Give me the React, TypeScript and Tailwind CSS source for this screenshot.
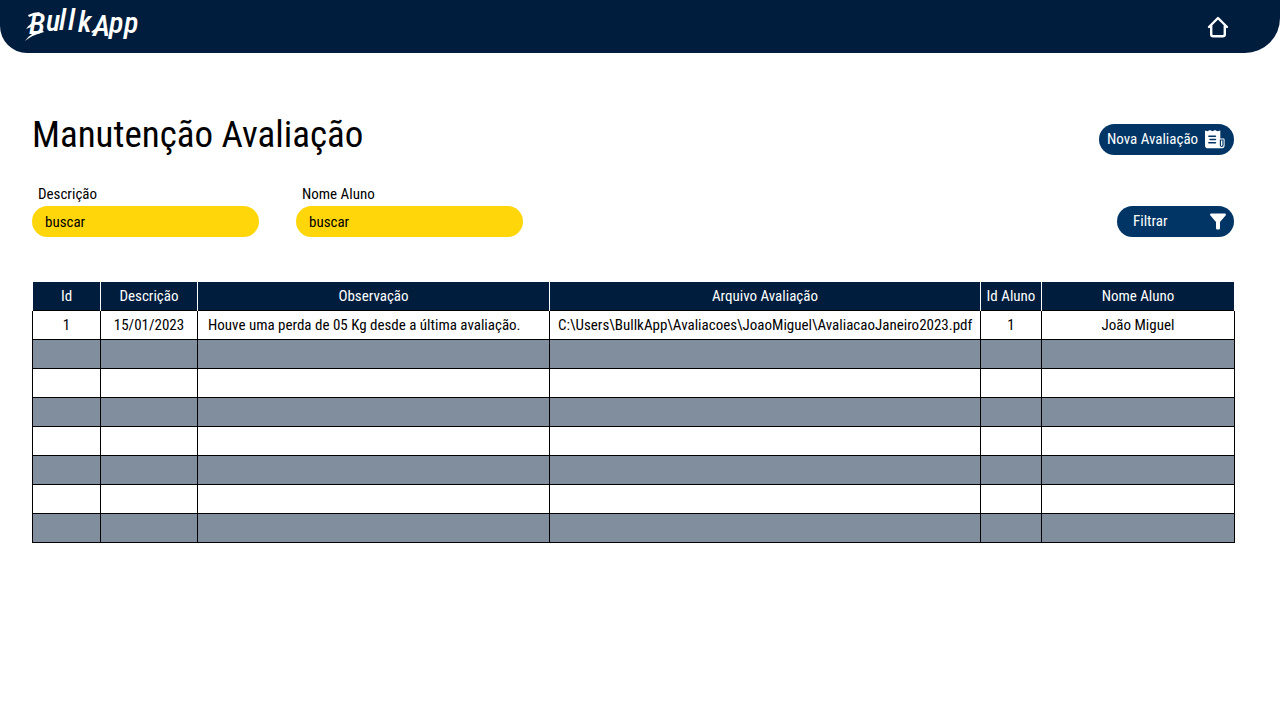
import React from "react";

type Evaluation = {
  id: string;
  date: string;
  note: string;
  file: string;
  studentId: string;
  student: string;
};

const evaluations: Evaluation[] = [
  {
    id: "1",
    date: "15/01/2023",
    note: "Houve uma perda de 05 Kg desde a última avaliação.",
    file: "C:\\Users\\BullkApp\\Avaliacoes\\JoaoMiguel\\AvaliacaoJaneiro2023.pdf",
    studentId: "1",
    student: "João Miguel",
  },
];

const emptyRow: Evaluation = { id: "", date: "", note: "", file: "", studentId: "", student: "" };
const rows: Evaluation[] = [...evaluations, ...Array.from({ length: 7 }, () => emptyRow)];

function Logo() {
  return (
    <svg viewBox="0 0 120 53" className="h-[53px] w-[120px] overflow-visible" fill="#fff" role="img" aria-label="BullkApp">
      <text
        x="5 22 35 44 54 69 85 100"
        y="34 31 30 30 32 36 33 33"
        fontFamily="'Roboto Condensed', 'Liberation Sans', sans-serif"
        fontStyle="italic"
        fontWeight="500"
        fontSize="30"
      >
        BullkApp
      </text>
      <path d="M4 15Q10 12 16 12L14 14.5Q10 14.5 5 17Z" />
      <path d="M1 41Q6 33 18 30L20 32Q8 35 1 41Z" />
      <path d="M2 29Q5 25 8 23L7 27Z" />
      <path d="M67 32Q70 29 75 27L74 29.5Q71 30.5 69 33Z" />
    </svg>
  );
}

function HomeIcon() {
  return (
    <svg viewBox="0 0 22 22" className="size-[22px]" fill="none" stroke="#fff" strokeWidth="2.4" strokeLinecap="round" strokeLinejoin="round" aria-hidden="true">
      <path d="M2 11L11 2L20 11M4.2 9.5V18.2Q4.2 20.2 6.2 20.2H15.8Q17.8 20.2 17.8 18.2V9.5" />
    </svg>
  );
}

function ReceiptIcon() {
  return (
    <svg viewBox="0 0 20 20" className="size-5 shrink-0" aria-hidden="true">
      <path fill="#fff" d="M0 1.5L2.5 2.3L5 1L7.5 2.3L10 1L12.5 2.3L15.3 1.5V9.6H18.5Q19.6 9.6 19.6 10.6V16.4Q19.6 19.2 16.5 19.2H3Q0 19.2 0 16.4Z" />
      <path stroke="#003566" strokeWidth="1.4" strokeLinecap="round" fill="none" d="M3.8 7.3H10.5M5 10.5H10.5M3.8 13.7H10.5" />
      <path fill="none" stroke="#003566" strokeWidth="1.2" d="M15.4 11H18V16Q18 17.5 16.7 17.5Q15.4 17.5 15.4 16Z" />
    </svg>
  );
}

function FilterIcon() {
  return (
    <svg viewBox="0 0 16 17" className="h-[17px] w-4" fill="#fff" aria-hidden="true">
      <path d="M.8.6H15.2Q16.4 1.2 15.6 2.4L10 8.9V15Q10 16.6 8.8 16.6H7.2Q6 16.6 6 15V8.9L.4 2.4Q-.4 1.2.8.6Z" />
    </svg>
  );
}

function SearchField({ id, label }: { id: string; label: string }) {
  return (
    <div className="flex w-[227px] flex-col">
      <label htmlFor={id} className="pl-1.5 leading-6">
        {label}
      </label>
      <input
        id={id}
        type="text"
        placeholder="buscar"
        className="h-[31px] w-full rounded-full bg-[#ffd60a] px-[13px] outline-none placeholder:text-black placeholder:opacity-100"
      />
    </div>
  );
}

export default function App() {
  return (
    <div className="min-h-screen bg-white font-['Roboto_Condensed','Liberation_Sans',sans-serif] text-[15px] text-black">
      <header className="flex h-[53px] items-center justify-between rounded-bl-[27px] rounded-br-[35px] bg-[#001d3d] pr-[51px] pl-6">
        <Logo />
        <a href="#" aria-label="Início">
          <HomeIcon />
        </a>
      </header>

      <main className="pt-[57px] pr-[45px] pl-8">
        <div className="flex items-center justify-between">
          <h1 className="text-[37px] leading-[50px]">Manutenção Avaliação</h1>
          <button type="button" className="mt-2 mr-px flex h-[31px] w-[135px] items-center justify-between rounded-full bg-[#003566] pr-[9px] pl-2 whitespace-nowrap text-white">
            Nova Avaliação
            <ReceiptIcon />
          </button>
        </div>

        <div className="mt-[22px] flex items-end justify-between">
          <div className="flex gap-[37px]">
            <SearchField id="descricao" label="Descrição" />
            <SearchField id="nome-aluno" label="Nome Aluno" />
          </div>
          <button type="button" className="mr-px flex h-[31px] w-[117px] items-center justify-between rounded-full bg-[#003566] pr-2 pl-4 text-white">
            Filtrar
            <FilterIcon />
          </button>
        </div>

        <table className="mt-[45px] w-full table-fixed border-collapse text-center leading-7 whitespace-nowrap">
          <colgroup>
            <col className="w-[68px]" />
            <col className="w-[97px]" />
            <col className="w-[352px]" />
            <col className="w-[431px]" />
            <col className="w-[61px]" />
            <col />
          </colgroup>
          <thead>
            <tr className="h-7 bg-[#001d3d] text-white *:border-x *:border-white *:p-0 *:font-normal">
              <th scope="col">Id</th>
              <th scope="col">Descrição</th>
              <th scope="col">Observação</th>
              <th scope="col">Arquivo Avaliação</th>
              <th scope="col">Id Aluno</th>
              <th scope="col">Nome Aluno</th>
            </tr>
          </thead>
          <tbody>
            {rows.map((row, i) => (
              <tr key={i} className="h-[29px] *:border *:border-black even:bg-[#808e9e]">
                <td>{row.id}</td>
                <td>{row.date}</td>
                <td className="pl-2.5 text-left">{row.note}</td>
                <td className="pl-2 text-left">{row.file}</td>
                <td>{row.studentId}</td>
                <td>{row.student}</td>
              </tr>
            ))}
          </tbody>
        </table>
      </main>
    </div>
  );
}
